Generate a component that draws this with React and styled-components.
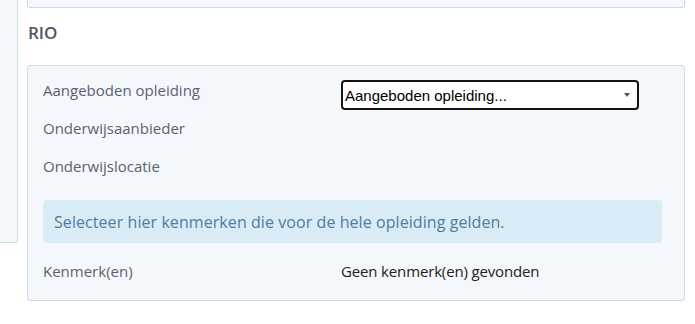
import React from 'react';
import styled, {createGlobalStyle} from "styled-components";

const GlobalStyle = createGlobalStyle`
    html, body {
        margin: 0;
        padding: 0;
        background: #fff;
        font-family: "Open Sans", "Liberation Sans", sans-serif;
    }
`

const Page = styled.div`
    display: flex;
    gap: 9px;
    padding-right: 10px;
    align-items: flex-start;
`

const Sidebar = styled.div`
    width: 17px;
    height: 242px;
    background-color: #f6f9fc;
    border-right: 1px solid #c9dde7;
    border-bottom: 1px solid #c9dde7;
    border-bottom-right-radius: 3px;
    flex-shrink: 0;
`

const Content = styled.div`
    flex: 1;
    display: flex;
    flex-direction: column;
`

const TopPanel = styled.div`
    height: 7px;
    background-color: #f4f8fc;
    border: 1px solid #c9dde7;
    border-top: none;
    border-radius: 0 0 3px 3px;
`

const Heading = styled.h3`
    margin: 13px 0 20px 1px;
    font-size: 17px;
    line-height: 24px;
    font-weight: 600;
    color: #4e5665;
`

const Panel = styled.div`
    background-color: #f4f8fc;
    border: 1px solid #c9dde7;
    border-radius: 3px;
    padding: 14px 22px 19px 15px;
`

const Row = styled.div`
    display: grid;
    grid-template-columns: 298px 1fr;
    align-items: start;
    height: ${p => p.$height || 38}px;
`

const Label = styled.div`
    font-size: 15px;
    line-height: 20px;
    color: #5a6270;
`

const Value = styled.div`
    font-size: 15px;
    line-height: 20px;
    letter-spacing: -0.15px;
    color: #222;
`

const SelectWrap = styled.div`
    position: relative;
    width: 298px;
    height: 30px;
`

const Select = styled.select`
    appearance: none;
    width: 100%;
    height: 100%;
    box-sizing: border-box;
    border: 2px solid #141414;
    border-radius: 4px;
    background: #fff;
    padding: 0 20px 0 2px;
    font-family: "Liberation Sans", Arial, sans-serif;
    font-size: 15px;
    color: #000;
    outline: none;
`

const Arrow = styled.span`
    position: absolute;
    right: 9px;
    top: 13px;
    width: 0;
    height: 0;
    border-left: 3px solid transparent;
    border-right: 3px solid transparent;
    border-top: 4px solid #555;
    pointer-events: none;
`

const Info = styled.div`
    margin: 6px 0 18px 0;
    height: 43px;
    display: flex;
    align-items: center;
    padding: 0 11px;
    background-color: #d9ebf5;
    border-radius: 4px;
    font-size: 16px;
    letter-spacing: 0.07px;
    color: #4d7ea3;
`

const rows = [
    {label: "Aangeboden opleiding", select: true},
    {label: "Onderwijsaanbieder"},
    {label: "Onderwijslocatie"},
]

const App = () => {
    return <Page>
        <GlobalStyle/>
        <Sidebar/>
        <Content>
            <TopPanel/>
            <Heading>RIO</Heading>
            <Panel>
                {rows.map(row =>
                    <Row key={row.label}>
                        <Label>{row.label}</Label>
                        {row.select &&
                            <SelectWrap>
                                <Select defaultValue="">
                                    <option value="">Aangeboden opleiding...</option>
                                </Select>
                                <Arrow/>
                            </SelectWrap>}
                    </Row>
                )}
                <Info>Selecteer hier kenmerken die voor de hele opleiding gelden.</Info>
                <Row $height={20}>
                    <Label>Kenmerk(en)</Label>
                    <Value>Geen kenmerk(en) gevonden</Value>
                </Row>
            </Panel>
        </Content>
    </Page>
}

export default App
